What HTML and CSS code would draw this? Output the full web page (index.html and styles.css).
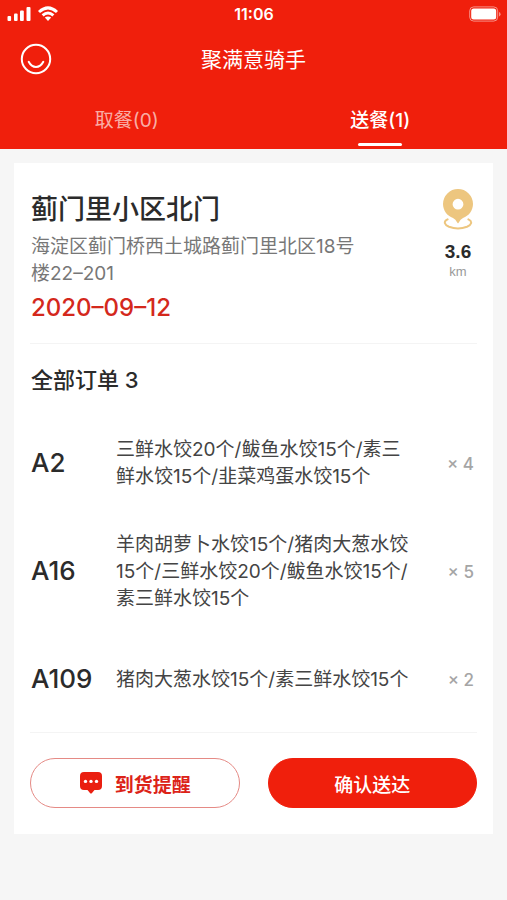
FILE: index.html
```html
<!DOCTYPE html>
<html lang="zh-CN">
<head>
<meta charset="utf-8">
<meta name="viewport" content="width=device-width, initial-scale=1">
<title>聚满意骑手</title>
<link rel="stylesheet" href="styles.css">
</head>
<body>
<header class="header">
  <div class="status">
    <div class="status-left">
      <svg class="signal" width="24" height="16" viewBox="0 0 24 16" aria-hidden="true">
        <rect x="0.5" y="10" width="3.6" height="5" rx="1"/>
        <rect x="7" y="7.600" width="3.600" height="7.400" rx="1"/>
        <rect x="13" y="4.600" width="3.800" height="10.400" rx="1"/>
        <rect x="19.500" y="1" width="4" height="14" rx="1"/>
      </svg>
      <svg class="wifi" width="22" height="16" viewBox="0 0 22 16" aria-hidden="true">
        <path d="M2 6Q11-2.200 20 6M5.600 9.400Q11 4.600 16.400 9.400"/>
        <path class="wifi-dot" d="M7.800 11.400Q11 9.400 14.200 11.400L11 15Z"/>
      </svg>
    </div>
    <time class="clock">11:06</time>
    <svg class="battery" width="32" height="16" viewBox="0 0 32 16" aria-hidden="true">
      <rect class="battery-case" x="0.700" y="0.900" width="28" height="14.200" rx="4"/>
      <rect class="battery-fill" x="2.200" y="2.600" width="25" height="10.800" rx="2.500"/>
      <path class="battery-cap" d="M30 6V10.400Q31.600 9.800 31.600 8.200T30 6Z"/>
    </svg>
  </div>
  <div class="titlebar">
    <button class="profile" type="button" aria-label="我的">
      <svg width="32" height="32" viewBox="0 0 32 32" aria-hidden="true">
        <circle cx="16" cy="16" r="14.200"/>
        <path d="M8.700 18.800Q11.400 24 16 24T23.300 18.800"/>
      </svg>
    </button>
    <h1 class="app-title">聚满意骑手</h1>
  </div>
  <nav class="tabs">
    <a class="tab" href="#pickup">取餐(0)</a>
    <a class="tab tab-active" href="#deliver" aria-current="page">送餐(1)</a>
  </nav>
</header>
<main class="card">
  <section class="place">
    <div class="place-text">
      <h2 class="place-name">蓟门里小区北门</h2>
      <p class="address">海淀区蓟门桥西土城路蓟门里北区18号楼22–201</p>
      <p class="date">2020–09–12</p>
    </div>
    <div class="distance">
      <svg width="32" height="42" viewBox="0 0 32 42" aria-hidden="true">
        <path class="pin" fill-rule="evenodd" d="M16 1A15 15 0 0 1 31 16C31 22.400 26.800 28 21 30Q18.300 31.200 16.800 34.600Q16 36.200 15.200 34.600Q13.700 31.200 11 30C5.200 28 1 22.400 1 16A15 15 0 0 1 16 1ZM16 10.800A5.400 5.400 0 1 0 16 21.600A5.400 5.400 0 1 0 16 10.800Z"/>
        <path class="ring" d="M5.600 31.400C1 33.600 2.600 37 7 38.800Q16 42 25 38.800C29.400 37 31 33.600 26.400 31.400"/>
      </svg>
      <strong class="distance-value">3.6</strong>
      <span class="distance-unit">km</span>
    </div>
  </section>
  <section class="orders">
    <h3 class="orders-title">全部订单 3</h3>
    <ul class="order-list">
      <li class="order">
        <span class="code">A2</span>
        <p class="dishes">三鲜水饺20个/鲅鱼水饺15个/素三鲜水饺15个/韭菜鸡蛋水饺15个</p>
        <span class="count">× 4</span>
      </li>
      <li class="order">
        <span class="code">A16</span>
        <p class="dishes">羊肉胡萝卜水饺15个/猪肉大葱水饺15个/三鲜水饺20个/鲅鱼水饺15个/素三鲜水饺15个</p>
        <span class="count">× 5</span>
      </li>
      <li class="order">
        <span class="code">A109</span>
        <p class="dishes">猪肉大葱水饺15个/素三鲜水饺15个</p>
        <span class="count">× 2</span>
      </li>
    </ul>
  </section>
  <div class="actions">
    <button class="button button-outline" type="button">
      <svg width="24" height="24" viewBox="0 0 24 24" aria-hidden="true">
        <path class="bubble" d="M5 1H19Q23 1 23 5V15Q23 19 19 19H15.500L12.800 22.200Q12 23 11.200 22.200L8.500 19H5Q1 19 1 15V5Q1 1 5 1Z"/>
        <circle class="bubble-dot" cx="6.500" cy="10.400" r="1.700"/>
        <circle class="bubble-dot" cx="12" cy="10.400" r="1.700"/>
        <circle class="bubble-dot" cx="17.500" cy="10.400" r="1.700"/>
      </svg>
      <span>到货提醒</span>
    </button>
    <button class="button button-solid" type="button">确认送达</button>
  </div>
</main>
</body>
</html>
```
FILE: styles.css
```css
:root {
  --red: #f01f0c;
  --font: Inter, "Noto Sans CJK SC", sans-serif;
}

* {
  box-sizing: border-box;
}

body {
  margin: 0;
  min-height: 100vh;
  background: #f6f6f6;
  color: #2b2b2b;
  font-family: var(--font);
}

h1, h2, h3, p, ul {
  margin: 0;
  padding: 0;
  font-weight: 500;
}

button {
  font-family: inherit;
  cursor: pointer;
}

.header {
  background: var(--red);
  color: #fff;
}

.status {
  display: grid;
  grid-template-columns: 1fr auto 1fr;
  align-items: center;
  height: 28px;
  padding: 0 6px 0 7px;
}

.status-left {
  display: flex;
  gap: 6px;
}

.signal,
.wifi-dot,
.battery-fill,
.battery-cap {
  fill: #fff;
}

.wifi {
  fill: none;
  stroke: #fff;
  stroke-width: 3;
}

.wifi-dot {
  stroke: none;
}

.clock {
  font-size: 16px;
  font-weight: 600;
}

.battery {
  justify-self: end;
}

.battery-case {
  fill: none;
  stroke: #fff;
  stroke-opacity: 0.5;
}

.battery-cap {
  fill-opacity: 0.5;
}

.titlebar {
  display: grid;
  grid-template-columns: 1fr auto 1fr;
  align-items: center;
  height: 62px;
  padding: 0 20px;
}

.profile {
  display: flex;
  justify-self: start;
  padding: 0;
  border: 0;
  background: none;
}

.profile svg {
  fill: none;
  stroke: #fff;
  stroke-width: 2;
  stroke-linecap: round;
}

.app-title {
  padding-bottom: 2px;
  font-size: 21px;
  font-weight: 400;
}

.tabs {
  display: grid;
  grid-template-columns: 1fr 1fr;
}

.tab {
  display: flex;
  flex-direction: column;
  align-items: center;
  height: 59px;
  padding-top: 17px;
  color: rgba(255, 255, 255, 0.65);
  font-size: 19px;
  line-height: 27px;
  text-decoration: none;
}

.tab-active {
  color: #fff;
  font-weight: 500;
}

.tab-active::after {
  content: "";
  width: 44px;
  height: 3px;
  margin-top: 9px;
  border-radius: 2px;
  background: #fff;
}

.card {
  margin: 14px;
  padding: 0 16px;
  background: #fff;
}

.place {
  display: flex;
  justify-content: space-between;
  padding: 25px 0 18px;
  border-bottom: 1px solid #f4f4f4;
}

.place-text {
  flex: 0 1 332px;
  padding: 3px 0 0 1px;
}

.place-name {
  font-size: 27px;
  line-height: 38px;
}

.address {
  margin-top: 4px;
  color: #777;
  font-size: 19px;
  font-weight: 400;
  line-height: 27px;
}

.date {
  margin-top: 4px;
  color: #d4281c;
  font-size: 24px;
  line-height: 34px;
}

.distance {
  display: flex;
  flex-direction: column;
  align-items: center;
  width: 38px;
  font-family: "Liberation Sans", sans-serif;
}

.distance svg {
  flex: none;
}

.pin {
  fill: #edc67f;
}

.ring {
  fill: none;
  stroke: #edc67f;
  stroke-width: 2;
  stroke-linecap: round;
}

.distance-value {
  margin-top: 10px;
  font-size: 19px;
  line-height: 24px;
}

.distance-unit {
  color: #999;
  font-size: 13px;
  line-height: 16px;
}

.orders {
  padding-top: 8px;
  border-bottom: 1px solid #f4f4f4;
}

.orders-title {
  padding-left: 1px;
  font-size: 22px;
  line-height: 56px;
}

.order-list {
  list-style: none;
}

.order {
  display: grid;
  grid-template-columns: 86px 1fr 60px;
  align-items: center;
  min-height: 108px;
}

.code {
  padding-left: 1px;
  font-size: 26px;
  font-weight: 500;
}

.dishes {
  padding-top: 2px;
  color: #444;
  font-size: 19px;
  font-weight: 400;
  line-height: 27px;
}

.count {
  padding: 4px 3px 0 0;
  color: #a5a5a5;
  font-size: 17px;
  text-align: right;
}

.actions {
  display: grid;
  grid-template-columns: 1fr 1fr;
  gap: 28px;
  padding: 25px 0 26px;
}

.button {
  display: flex;
  align-items: center;
  justify-content: center;
  gap: 12px;
  height: 50px;
  border: 1px solid var(--red);
  border-radius: 25px;
  font-size: 19px;
}

.button-outline {
  border-color: #e58a85;
  background: #fff;
  color: #dc2318;
  font-weight: 700;
}

.button-solid {
  background: var(--red);
  color: #fff;
  font-weight: 500;
}

.bubble {
  fill: #ea1f10;
}

.bubble-dot {
  fill: #fff;
}
```
